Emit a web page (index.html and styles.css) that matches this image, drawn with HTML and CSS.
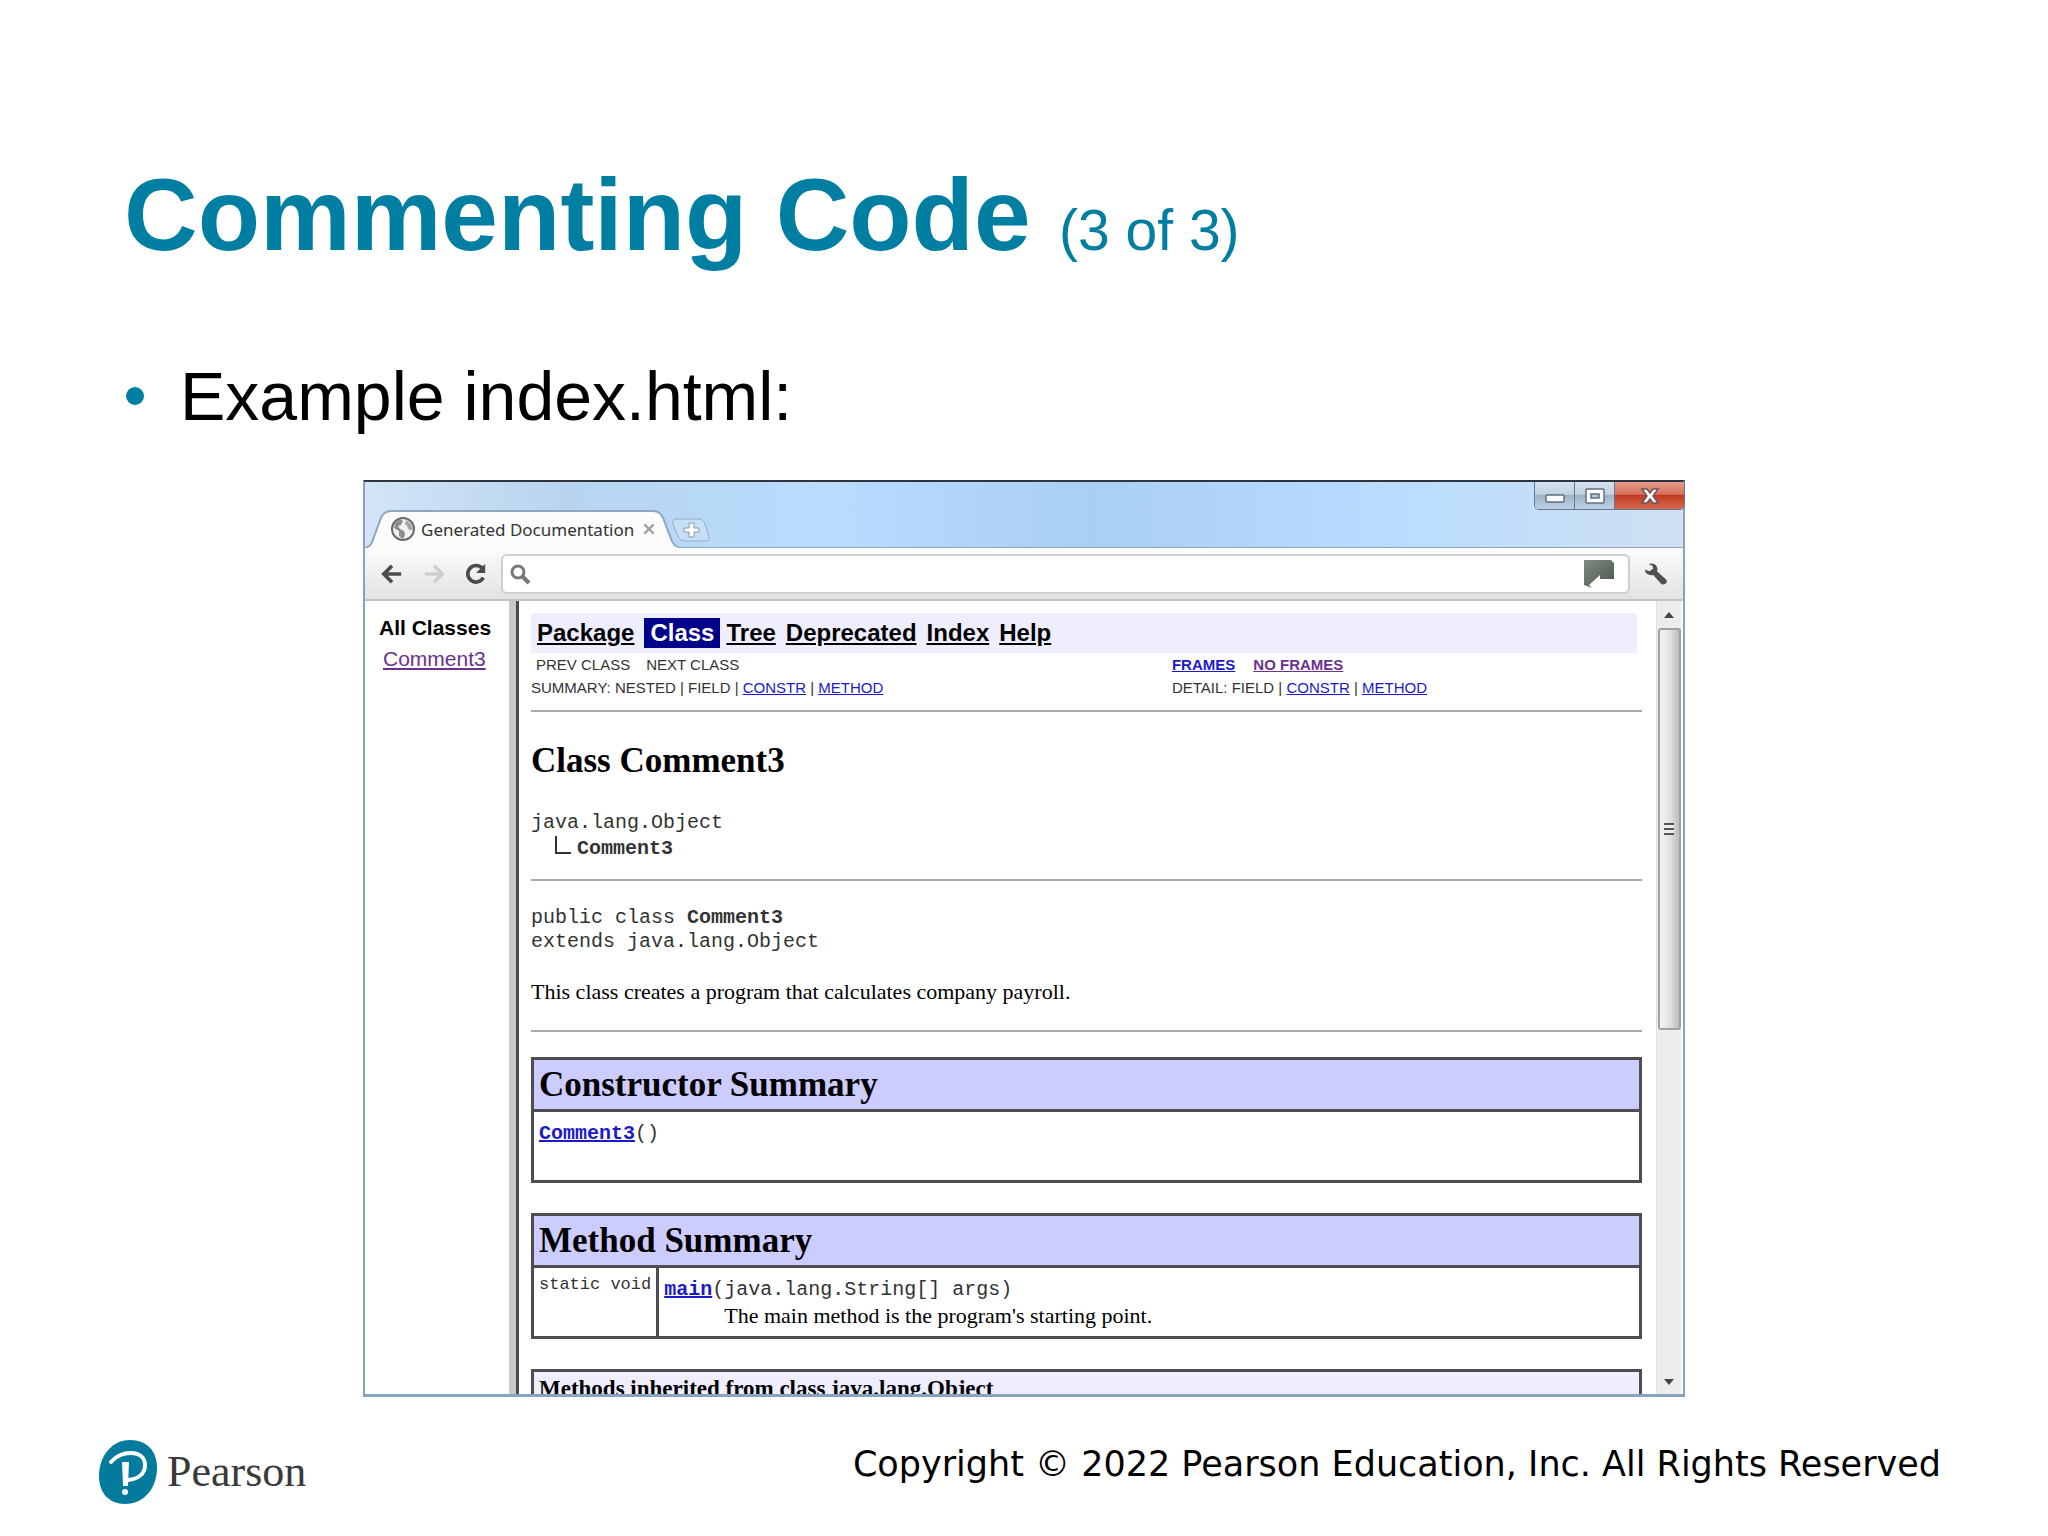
FILE: index.html
```
<!DOCTYPE html>
<html lang="en">
<head>
    <meta charset="UTF-8">
    <meta name="viewport" content="width=device-width, initial-scale=1.0">
    <title>Commenting Code</title>
    <link rel="stylesheet" href="styles.css">
</head>
<body>
    <main class="slide">
        <h1>Commenting Code <span class="part">(3 of 3)</span></h1>
        <ul class="points">
            <li>Example index.html:</li>
        </ul>

        <section class="window">
            <div class="titlebar">
                <div class="tab">
                    <svg class="tab-shape" viewBox="0 0 316 38" preserveAspectRatio="none">
                        <path d="M0 38 C7 36 7 32 9 27 L16 8 Q19 1 26 1 H290 Q297 1 300 8 L308 29 Q311 37 316 37 V38 Z" fill="#fcfcfc"/>
                        <path d="M0 38 C7 36 7 32 9 27 L16 8 Q19 1 26 1 H290 Q297 1 300 8 L308 29 Q311 37 316 37" fill="none" stroke="#8ea6bf" stroke-width="2"/>
                    </svg>
                    <svg class="globe" viewBox="0 0 24 24">
                        <circle cx="12" cy="12" r="11" fill="#f2f2f2" stroke="#6a6a6a" stroke-width="2"/>
                        <path d="M4 6 L9 2 L12 4 L10 8 L7 9 L9 12 L13 14 L14 18 L12 22 L8 19 L8 14 L3 11 Z" fill="#8d8d8d"/>
                        <path d="M15 3 L20 7 L22 13 L18 13 L16 9 L14 7 Z" fill="#a5a5a5"/>
                    </svg>
                    <span class="tab-title">Generated Documentation</span>
                    <button type="button" class="tab-close" aria-label="Close tab">
                        <svg viewBox="0 0 12 12"><path d="M2 2 L10 10 M10 2 L2 10" stroke="#a0a0a0" stroke-width="2"/></svg>
                    </button>
                </div>
                <button type="button" class="new-tab" aria-label="New tab">
                    <svg viewBox="0 0 40 26">
                        <path d="M5 2 H27 Q32 2 34 7 L38 19 Q39 24 34 24 H14 Q9 24 7 19 L2 7 Q1 2 5 2 Z" fill="#c6dff6" stroke="#93adc8" stroke-width="1"/>
                        <path d="M18 6 H23 V11 H28 V15 H23 V20 H18 V15 H13 V11 H18 Z" fill="#fff" stroke="#8298b0" stroke-width="1"/>
                    </svg>
                </button>
                <div class="controls">
                    <button type="button" class="minimize" aria-label="Minimize">
                        <svg viewBox="0 0 20 16"><rect x="1" y="7" width="18" height="7" rx="1" fill="#fff" stroke="#5f6f80" stroke-width="1.5"/></svg>
                    </button>
                    <button type="button" class="maximize" aria-label="Maximize">
                        <svg viewBox="0 0 20 16">
                            <rect x="1" y="1" width="18" height="14" rx="1" fill="#fff" stroke="#5f6f80" stroke-width="1.5"/>
                            <rect x="6" y="6" width="8" height="4" fill="#b9c8d6" stroke="#5f6f80" stroke-width="1.5"/>
                        </svg>
                    </button>
                    <button type="button" class="close" aria-label="Close">
                        <svg viewBox="0 0 20 16"><path d="M2 1 H7 L10 5 L13 1 H18 L13 8 L18 15 H13 L10 11 L7 15 H2 L7 8 Z" fill="#fff" stroke="#6d5560" stroke-width="1.5"/></svg>
                    </button>
                </div>
            </div>

            <div class="toolbar">
                <button type="button" aria-label="Back">
                    <svg viewBox="0 0 24 24"><path d="M22 12 H4 M12 3 L3 12 L12 21" fill="none" stroke="#4b4b4b" stroke-width="4"/></svg>
                </button>
                <button type="button" aria-label="Forward">
                    <svg viewBox="0 0 24 24"><path d="M2 12 H20 M12 3 L21 12 L12 21" fill="none" stroke="#cfcfcf" stroke-width="4"/></svg>
                </button>
                <button type="button" aria-label="Reload">
                    <svg viewBox="0 0 24 24">
                        <path d="M19 6 A9 9 0 1 0 20 16" fill="none" stroke="#4b4b4b" stroke-width="4"/>
                        <path d="M22 1 V11 H12 Z" fill="#4b4b4b"/>
                    </svg>
                </button>
                <label class="address">
                    <svg class="search" viewBox="0 0 22 22">
                        <circle cx="9" cy="9" r="6" fill="none" stroke="#777" stroke-width="3"/>
                        <path d="M13 13 L20 20" stroke="#777" stroke-width="4"/>
                    </svg>
                    <input type="text" aria-label="Address">
                    <svg class="page-icon" viewBox="0 0 32 28">
                        <defs>
                            <linearGradient id="slate" x1="0" y1="0" x2="1" y2="1">
                                <stop offset="0" stop-color="#7f8a80"/>
                                <stop offset="1" stop-color="#4c564e"/>
                            </linearGradient>
                        </defs>
                        <path d="M1 0 H28 L31 3 V19 H17 V15 L6 25 L9 28 L1 25 Z" fill="url(#slate)"/>
                    </svg>
                </label>
                <button type="button" class="wrench" aria-label="Settings">
                    <svg viewBox="0 0 24 24"><path d="M4 1 Q10 -1 13 4 Q14 7 13 9 L23 18 Q25 21 22 23 Q19 24 17 22 L9 13 Q4 14 1 11 Q0 9 0 7 L5 9 L9 6 L8 3 Z" fill="#505050"/></svg>
                </button>
            </div>

            <div class="frames">
                <nav class="classes">
                    <h2>All Classes</h2>
                    <a class="visited" href="#class">Comment3</a>
                </nav>
                <div class="splitter"></div>
                <article class="doc" id="class">
                    <nav class="navbar">
                        <a href="#package">Package</a>
                        <span class="current">Class</span>
                        <a href="#tree">Tree</a>
                        <a href="#deprecated">Deprecated</a>
                        <a href="#index">Index</a>
                        <a href="#help">Help</a>
                    </nav>
                    <div class="subnav">
                        <div>
                            <p class="prev-next"><span>PREV CLASS</span><span>NEXT CLASS</span></p>
                            <p>SUMMARY: NESTED | FIELD | <a href="#constr">CONSTR</a> | <a href="#method">METHOD</a></p>
                        </div>
                        <div>
                            <p class="frame-links"><a href="#frames">FRAMES</a><a class="visited" href="#noframes">NO FRAMES</a></p>
                            <p>DETAIL: FIELD | <a href="#constr">CONSTR</a> | <a href="#method">METHOD</a></p>
                        </div>
                    </div>
                    <hr>
                    <h2 class="class-name">Class Comment3</h2>
                    <div class="tree">
                        <div>java.lang.Object</div>
                        <div class="child">
                            <svg viewBox="0 0 16 18"><path d="M1 0 V17 H16" fill="none" stroke="#333" stroke-width="2"/></svg>
                            <b>Comment3</b>
                        </div>
                    </div>
                    <hr>
                    <pre>public class <b>Comment3</b>
extends java.lang.Object</pre>
                    <p class="about">This class creates a program that calculates company payroll.</p>
                    <hr>

                    <table id="constr">
                        <tr><th>Constructor Summary</th></tr>
                        <tr><td><code><a href="#comment3"><b>Comment3</b></a>()</code></td></tr>
                    </table>

                    <table id="method">
                        <tr><th colspan="2">Method Summary</th></tr>
                        <tr>
                            <td class="type"><code>static void</code></td>
                            <td>
                                <code><a href="#main"><b>main</b></a>(java.lang.String[] args)</code>
                                <p class="note">The main method is the program's starting point.</p>
                            </td>
                        </tr>
                    </table>

                    <table class="inherited">
                        <tr><th>Methods inherited from class java.lang.Object</th></tr>
                    </table>
                </article>
                <div class="scrollbar">
                    <svg class="arrow" viewBox="0 0 10 6"><path d="M0 6 L5 0 L10 6 Z" fill="#444"/></svg>
                    <div class="thumb"><span class="grip"></span></div>
                    <svg class="arrow" viewBox="0 0 10 6"><path d="M0 0 L5 6 L10 0 Z" fill="#444"/></svg>
                </div>
            </div>
        </section>

        <footer>
            <div class="brand">
                <svg viewBox="0 0 58 64">
                    <path d="M31 0 C48 0 58 11 58 28 C58 48 45 64 26 64 C10 64 0 53 0 36 C0 16 13 0 31 0 Z" fill="#047a9c"/>
                    <path d="M12 22 C18 15 25 13 32 13 C41 13 46 18 46 25 C46 34 39 39 29 40" fill="none" stroke="#fff" stroke-width="4" stroke-linecap="round"/>
                    <path d="M23 22 H30 L29 46 H24 Z" fill="#fff"/>
                    <circle cx="26" cy="52" r="3" fill="#fff"/>
                </svg>
                <span>Pearson</span>
            </div>
            <p class="copyright">Copyright © 2022 Pearson Education, Inc. All Rights Reserved</p>
        </footer>
    </main>
</body>
</html>
```
FILE: styles.css
```
* {
    box-sizing: border-box;
}
body {
    margin: 0;
    background: #fff;
    color: #000;
    font-family: "Liberation Sans", Arial, sans-serif;
}
h1, h2, p, ul, pre {
    margin: 0;
    padding: 0;
}
button {
    display: flex;
    align-items: center;
    justify-content: center;
    padding: 0;
    border: none;
    background: none;
    cursor: pointer;
}
svg {
    display: block;
}
a {
    color: #1a1acc;
}
a.visited {
    color: #6a3290;
}

/* slide */
.slide {
    display: flex;
    flex-direction: column;
    height: 100vh;
    padding: 155px 107px 32px 99px;
}
h1 {
    padding-left: 25px;
    color: #007fa3;
    font-size: 102px;
    line-height: 120px;
}
.part {
    font-size: 57px;
    font-weight: normal;
}
.points {
    margin: 66px 0 44px 27px;
    list-style: none;
    font-size: 68px;
    line-height: 80px;
}
.points li {
    display: flex;
    align-items: center;
    gap: 36px;
}
.points li::before {
    content: "";
    width: 18px;
    height: 18px;
    border-radius: 50%;
    background: #007fa3;
}

/* browser window */
.window {
    display: flex;
    flex-direction: column;
    flex: 1;
    min-height: 0;
    margin: 0 256px 0 264px;
    border: 2px solid #88a3bd;
    border-top-color: #2c3540;
    border-bottom-width: 3px;
}
.titlebar {
    display: flex;
    align-items: flex-end;
    flex: none;
    height: 66px;
    background: linear-gradient(90deg, #d3e5f6 0, #b8d4ef 15%, #b9dcff 35%, #a9cff3 55%, #b9dcff 78%, #cfe0f1 100%);
    border-bottom: 1px solid #8ea6bf;
}
.tab {
    position: relative;
    display: flex;
    align-items: center;
    width: 314px;
    height: 38px;
    margin-bottom: -1px;
    padding-left: 26px;
}
.tab-shape {
    position: absolute;
    inset: 0;
    width: 100%;
    height: 100%;
}
.globe {
    position: relative;
    width: 24px;
    height: 24px;
}
.tab-title {
    position: relative;
    margin-left: 6px;
    color: #333;
    font-family: "Noto Sans", sans-serif;
    font-size: 17px;
    white-space: nowrap;
}
.tab-close {
    position: relative;
    margin-left: 8px;
}
.tab-close svg {
    width: 14px;
    height: 14px;
}
.new-tab {
    margin: 0 0 4px -8px;
}
.new-tab svg {
    width: 40px;
    height: 26px;
}
.controls {
    display: flex;
    align-self: flex-start;
    height: 28px;
    margin: 0 -2px 0 auto;
    border: 1px solid #66788b;
    border-top: none;
    border-radius: 0 0 5px 5px;
    overflow: hidden;
}
.controls button {
    width: 40px;
    border-right: 1px solid #66788b;
    background: linear-gradient(#d4e2ef 0, #c2d2e2 45%, #9fb4c8 50%, #bdd2e4 100%);
}
.controls svg {
    width: 20px;
    height: 16px;
}
.controls .close {
    width: 69px;
    border-right: none;
    background: linear-gradient(#e59c8e 0, #d9705c 45%, #c03a22 50%, #d8694f 100%);
}
.toolbar {
    display: flex;
    align-items: center;
    flex: none;
    height: 53px;
    padding: 0 15px;
    background: linear-gradient(#fcfcfc, #e2e2e2);
    border-bottom: 2px solid #c4c4c4;
}
.toolbar button {
    margin-right: 18px;
}
.toolbar button svg {
    width: 24px;
    height: 22px;
}
.address {
    display: flex;
    align-items: center;
    flex: 1;
    height: 40px;
    margin: 0 14px 0 -5px;
    padding: 0 13px 0 6px;
    border: 2px solid #cfcfcf;
    border-radius: 6px;
    background: #fff;
}
.address input {
    flex: 1;
    border: none;
    outline: none;
    background: none;
    font-size: 18px;
}
.search {
    width: 22px;
    height: 22px;
}
.page-icon {
    width: 32px;
    height: 28px;
}
.toolbar .wrench {
    margin-right: 0;
}

/* javadoc frames */
.frames {
    display: flex;
    flex: 1;
    min-height: 0;
    padding-right: 2px;
}
.classes {
    flex: none;
    width: 144px;
    padding: 14px 0 0 14px;
    font-size: 21px;
    line-height: 26px;
}
.classes h2 {
    margin-bottom: 5px;
    font-size: 21px;
    white-space: nowrap;
}
.classes a {
    margin-left: 4px;
}
.splitter {
    flex: none;
    width: 10px;
    background: #c9c9c9;
    border-right: 3px solid #4a4a4a;
}
.doc {
    flex: 1;
    padding: 12px 14px 0 12px;
    overflow: hidden;
    font-family: "Liberation Serif", "Times New Roman", serif;
    font-size: 22px;
    line-height: 26px;
}
.navbar {
    display: flex;
    align-items: center;
    gap: 10px;
    height: 40px;
    margin-right: 5px;
    padding-left: 6px;
    background: #eeeeff;
    font-family: "Liberation Sans", Arial, sans-serif;
    font-size: 24px;
    font-weight: bold;
    line-height: 30px;
}
.navbar a {
    color: #000;
}
.current {
    margin-right: -4px;
    padding: 0 6px;
    background: #00008b;
    color: #fff;
}
.subnav {
    display: grid;
    grid-template-columns: 15fr 11fr;
    padding-bottom: 11px;
    color: #333;
    font-family: "Liberation Sans", Arial, sans-serif;
    font-size: 15px;
    line-height: 23px;
}
.prev-next {
    display: flex;
    gap: 16px;
    padding-left: 5px;
}
.frame-links {
    display: flex;
    gap: 18px;
    font-weight: bold;
}
hr {
    height: 2px;
    margin: 0;
    border: none;
    background: #aaa;
}
.class-name {
    margin: 29px 0;
    font-size: 35px;
    line-height: 40px;
}
.tree, pre, code {
    color: #333;
    font-family: "Liberation Mono", "Courier New", monospace;
    font-size: 20px;
    line-height: 25px;
}
.tree {
    margin-bottom: 17px;
    line-height: 26px;
}
.child {
    display: flex;
    gap: 6px;
    padding-left: 24px;
}
.child svg {
    width: 16px;
    height: 18px;
}
pre {
    margin: 25px 0;
    line-height: 24px;
}
.about {
    margin-bottom: 25px;
}
table {
    width: 100%;
    margin: 25px 0 30px;
    border-collapse: collapse;
}
table + table {
    margin-top: 0;
}
th, td {
    border: 3px solid #4d4d52;
}
th {
    padding: 4px 5px;
    background: #ccccff;
    font-size: 35px;
    line-height: 41px;
    text-align: left;
}
td {
    height: 71px;
    padding: 9px 5px 0;
    vertical-align: top;
}
code {
    display: block;
    white-space: nowrap;
}
.type {
    width: 1px;
    padding-top: 4px;
}
.type code {
    font-size: 17px;
}
.note {
    padding-left: 60px;
    line-height: 28px;
}
.inherited th {
    background: #eeeeff;
    font-size: 23px;
    line-height: 26px;
}
.scrollbar {
    display: flex;
    flex-direction: column;
    align-items: center;
    flex: none;
    width: 25px;
    padding: 11px 0 9px;
    background: #ededed;
    border-left: 1px solid #e0e0e0;
}
.arrow {
    width: 10px;
    height: 6px;
}
.thumb {
    display: flex;
    align-items: center;
    justify-content: center;
    width: 23px;
    height: 52%;
    margin: 10px 0 auto;
    border: 2px solid #a2a2a2;
    border-radius: 3px;
    background: linear-gradient(90deg, #f6f6f6, #e2e2e2 50%, #bdbdbd);
}
.grip {
    width: 10px;
    height: 12px;
    background: repeating-linear-gradient(#555 0 2px, #eee 2px 5px);
}

/* footer */
footer {
    display: flex;
    justify-content: space-between;
    margin-top: 43px;
}
.brand {
    display: flex;
    align-items: center;
    gap: 10px;
    color: #3a3a3a;
    font-family: "Liberation Serif", serif;
    font-size: 44px;
    line-height: 64px;
}
.brand svg {
    width: 58px;
    height: 64px;
}
.copyright {
    font-family: Verdana, "DejaVu Sans", sans-serif;
    font-size: 35px;
    line-height: 48px;
}
```
